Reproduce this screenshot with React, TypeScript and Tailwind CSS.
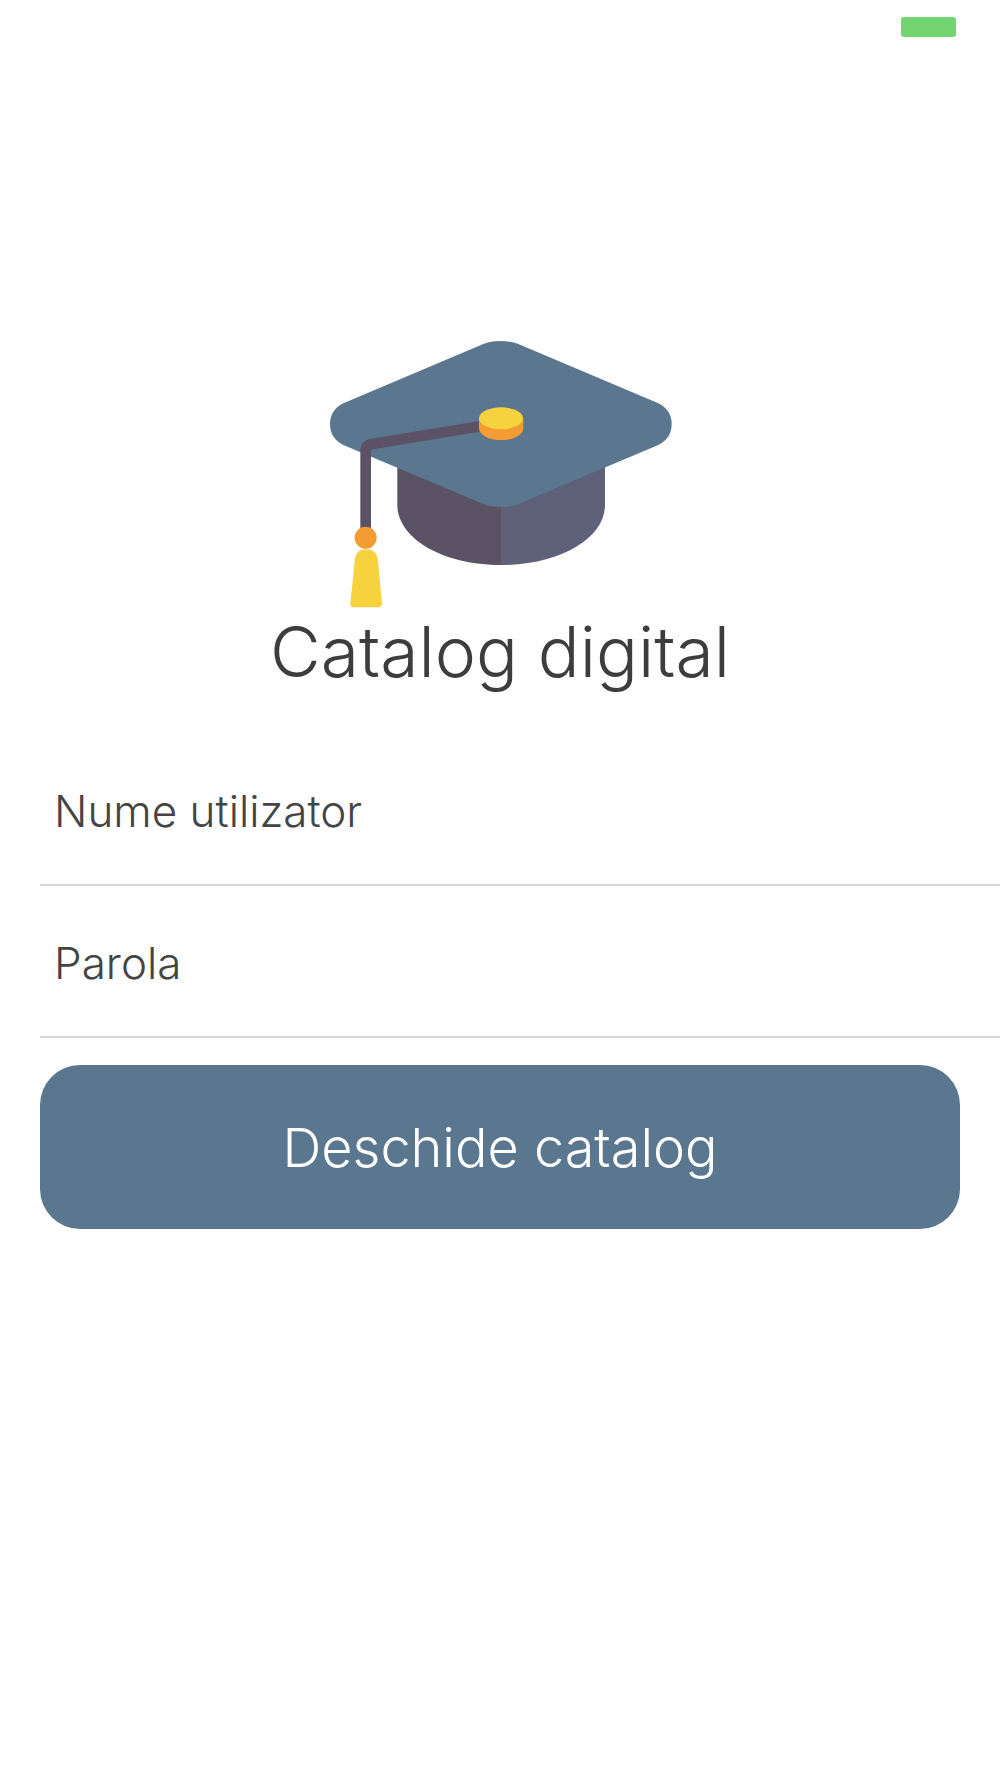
import React from 'react';

const GraduationCap: React.FC = () => (
  <svg viewBox="0 0 1140 900" className="block h-[300px] w-[380px]">
    <path d="M262 430 V555 C262 652 392 735 574 735 V540 Z" fill="#5c5266" />
    <path d="M573 540 V735 C755 735 885 652 885 555 V430 Z" fill="#5f6079" />
    <path
      d="M520 72 C545 60 600 60 625 72 L1045 250 Q1085 270 1085 312 Q1085 355 1045 375 L625 552 C600 564 545 564 520 552 L100 375 Q60 355 60 312 Q60 270 100 250 Z"
      fill="#5a778f"
    />
    <path d="M167 630 V392 Q167 376 182 373 L515 318" fill="none" stroke="#5c5266" strokeWidth="32" />
    <path d="M507 295 V325 A66 35 0 0 0 640 325 V295 Z" fill="#f29c33" />
    <ellipse cx="573" cy="295" rx="66" ry="33" fill="#f7d23f" />
    <circle cx="167" cy="653" r="33" fill="#f29c33" />
    <path
      d="M135 715 Q140 688 168 688 Q198 688 203 715 L216 850 Q216 862 205 862 H130 Q120 862 121 850 Z"
      fill="#f7d23f"
    />
  </svg>
);

const Field: React.FC<{ label: string }> = ({ label }) => (
  <div className="ml-10 flex h-[152px] items-center border-b-2 border-[#d8d8dc] pt-[4px] pl-[14px] text-[44px] font-light text-[#444444]">
    {label}
  </div>
);

export default function App() {
  return (
    <div className="flex min-h-[1778px] flex-col bg-[#fefefe] font-['Inter',sans-serif]">
      <div className="flex justify-end pt-[17px] pr-[44px]">
        <div className="h-5 w-[55px] rounded-[3px] bg-[#72d572]" />
      </div>
      <div className="mt-[283px] flex flex-col items-center">
        <GraduationCap />
        <h1 className="-mt-[8px] text-[69.7px] leading-[80px] font-light text-[#3d3d3d]">Catalog digital</h1>
      </div>
      <div className="mt-[42px]">
        <Field label="Nume utilizator" />
        <Field label="Parola" />
      </div>
      <button className="mt-[27px] ml-10 flex h-[164px] w-[920px] items-center justify-center rounded-[40px] bg-[#5a778f] text-[54px] font-light text-white">
        Deschide catalog
      </button>
    </div>
  );
}
